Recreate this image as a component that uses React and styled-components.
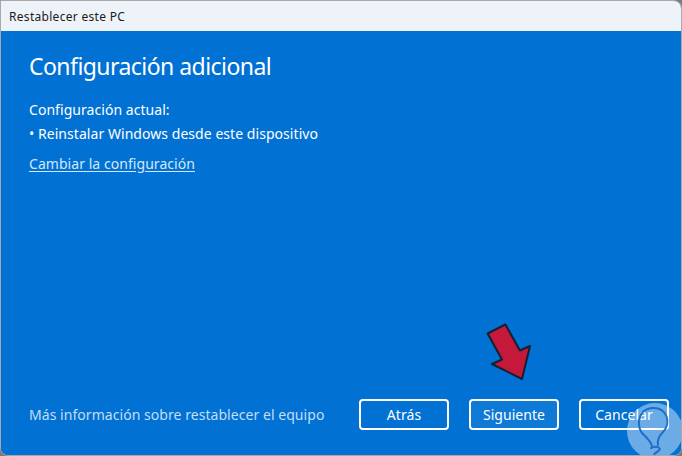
import styled, { createGlobalStyle } from "styled-components";

const GlobalStyle = createGlobalStyle`
    html, body {
        margin: 0;
        padding: 0;
        background: #7a7a7a;
    }
    body {
        font-family: "Noto Sans", "Open Sans", sans-serif;
    }
`;

const BLUE = "#0171d4";

const App = () => {
    return (
        <>
            <GlobalStyle />
            <Window>
                <TitleBar>Restablecer este PC</TitleBar>
                <Body>
                    <Heading>Configuración adicional</Heading>
                    <Label>Configuración actual:</Label>
                    <Bullet>• Reinstalar Windows desde este dispositivo</Bullet>
                    <LinkText href="#">Cambiar la configuración</LinkText>
                    <Spacer />
                    <Footer>
                        <MoreInfo>Más información sobre restablecer el equipo</MoreInfo>
                        <Buttons>
                            <Button>Atrás</Button>
                            <Button $focused>Siguiente</Button>
                            <Button>Cancelar</Button>
                        </Buttons>
                    </Footer>
                    <Arrow viewBox="0 0 52 66" aria-hidden="true">
                        <polygon
                            points="3.6,13.5 21.4,4.5 35.9,30.5 46,26 38,59 8,44 18,39.5"
                            fill="#c4193a"
                            stroke="#14202e"
                            strokeWidth="2"
                            strokeLinejoin="round"
                        />
                    </Arrow>
                    <Watermark viewBox="0 0 60 60" aria-hidden="true">
                        <circle cx="30" cy="30" r="28" fill="rgba(255,255,255,0.42)" />
                        <path
                            d="M20 35 C10 28, 12 8, 27 7 C42 6, 47 22, 38 31 C34 35, 32 39, 33 44 M20 35 C23 38, 26 41, 27 45"
                            fill="none"
                            stroke="#1d6fc9"
                            strokeWidth="2"
                            strokeLinecap="round"
                        />
                        <path
                            d="M26 47 C33 44, 38 48, 32 51 C26 54, 30 58, 38 55"
                            fill="none"
                            stroke="#1d6fc9"
                            strokeWidth="2"
                            strokeLinecap="round"
                        />
                    </Watermark>
                </Body>
            </Window>
        </>
    );
};

export default App;

const Window = styled.div`
    width: 682px;
    height: 456px;
    box-sizing: border-box;
    display: flex;
    flex-direction: column;
    border: 1px solid #a9a9a9;
    border-radius: 0 8px 8px 8px;
    overflow: hidden;
    background: ${BLUE};
`;

const TitleBar = styled.div`
    height: 30px;
    flex-shrink: 0;
    display: flex;
    align-items: center;
    padding-left: 8px;
    background: #eef3f9;
    color: #1b1b1b;
    font-size: 12px;
    letter-spacing: 0.3px;
`;

const Body = styled.div`
    position: relative;
    flex: 1;
    display: flex;
    flex-direction: column;
    align-items: flex-start;
    padding: 19px 12px 25px 28px;
    background: ${BLUE};
    color: #ffffff;
`;

const Heading = styled.h1`
    margin: 0 0 16px;
    font-size: 23px;
    font-weight: 400;
    line-height: 32px;
    letter-spacing: -0.55px;
`;

const Label = styled.div`
    font-size: 14px;
    line-height: 24px;
    letter-spacing: 0.05px;
`;

const Bullet = styled(Label)`
    margin-bottom: 6px;
`;

const LinkText = styled.a`
    font-size: 14px;
    line-height: 24px;
    letter-spacing: 0.05px;
    color: #d5e8f9;
    text-decoration: underline;
    text-underline-offset: 2px;
`;

const Spacer = styled.div`
    flex: 1;
`;

const Footer = styled.div`
    width: 100%;
    display: flex;
    align-items: center;
    justify-content: space-between;
`;

const MoreInfo = styled.div`
    font-size: 14px;
    letter-spacing: 0.05px;
    color: #c3def6;
`;

const Buttons = styled.div`
    display: flex;
    gap: 20px;
`;

const Button = styled.button`
    width: 90px;
    height: 31px;
    box-sizing: border-box;
    border: 2px solid #ffffff;
    border-radius: 4px;
    background: ${(p) => (p.$focused ? "#0f79d6" : "transparent")};
    color: #ffffff;
    font-family: "Noto Sans", "Open Sans", sans-serif;
    font-size: 14px;
    letter-spacing: 0.05px;
    padding: 0;
    cursor: pointer;
`;

const Arrow = styled.svg`
    position: absolute;
    left: 483px;
    top: 289px;
    width: 52px;
    height: 66px;
`;

const Watermark = styled.svg`
    position: absolute;
    left: 624px;
    top: 370px;
    width: 60px;
    height: 60px;
`;
